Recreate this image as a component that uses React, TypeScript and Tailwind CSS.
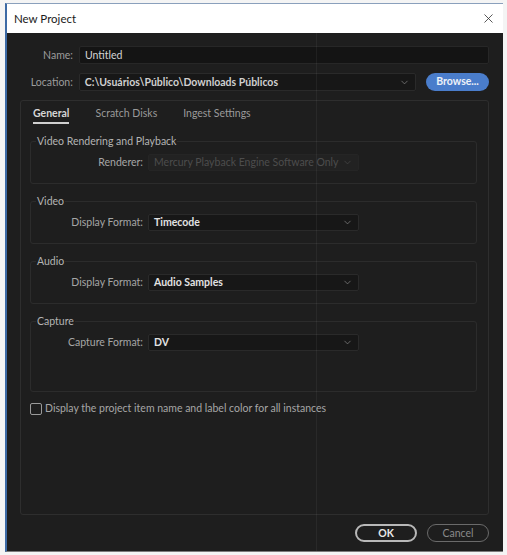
import { ChevronDown, X } from 'lucide-react'

const font = { fontFamily: 'Lato, "Noto Sans", sans-serif' }

function Select({ value, disabled, width = 'w-[211px]' }: { value: string; disabled?: boolean; width?: string }) {
  return (
    <div
      className={`${width} h-[17px] flex items-center justify-between pl-[5px] pr-[5px] rounded-[2px] border ${
        disabled ? 'bg-[#222222] border-[#252525] text-[#4d4d4d]' : 'bg-[#171717] border-[#2a2a2a] text-[#e2e2e2] font-bold'
      }`}
    >
      <span className="text-[10.5px] leading-none whitespace-nowrap">{value}</span>
      <ChevronDown size={11} strokeWidth={1.5} className={disabled ? 'text-[#4a4a4a] shrink-0' : 'text-[#8a8a8a] shrink-0'} />
    </div>
  )
}

function Group({ title, children, tall }: { title: string; children: React.ReactNode; tall?: boolean }) {
  return (
    <fieldset className={`border border-[#2c2c2c] rounded-[3px] ${tall ? 'h-[78px]' : 'h-[50px]'}`}>
      <legend className="ml-[5px] px-[1px] text-[10.5px] leading-[14px] text-[#b4b4b4]">{title}</legend>
      <div className="pt-[6px]">{children}</div>
    </fieldset>
  )
}

function Row({ label, value, disabled }: { label: string; value: string; disabled?: boolean }) {
  return (
    <div className="flex items-center">
      <span className="w-[113px] text-right text-[10.5px] text-[#a6a6a6] pr-[1px]">{label}</span>
      <div className="ml-[4px]">
        <Select value={value} disabled={disabled} />
      </div>
    </div>
  )
}

export default function App() {
  return (
    <div className="w-[507px] h-[555px] bg-[#f4f4f4] pt-[3px] pl-[5px] pr-[4px] pb-[3px]" style={font}>
      <div className="relative h-full flex flex-col border-t border-[#8aa0bc] border-l-2 border-l-[#3d6aa5] border-b border-b-[#7b7b7b]">
        {/* title bar */}
        <div className="h-[29px] bg-white flex items-center justify-between pl-[7px] pr-[7px]">
          <span className="text-[11.5px] text-[#1a1a1a]">New Project</span>
          <X size={15} strokeWidth={1.3} className="text-[#333]" />
        </div>

        {/* body */}
        <div className="relative flex-1 bg-[#1e1e1e] pt-[13px] pr-[14px] flex flex-col">
          <div className="absolute top-0 bottom-0 left-[309px] w-px bg-white/[0.05]" />

          <div className="flex items-center h-[18px]">
            <span className="w-[66px] text-right text-[10.5px] text-[#9c9c9c] pt-[1px]">Name:</span>
            <div className="ml-[6px] flex-1 h-[18px] bg-[#141414] border border-[#272727] rounded-[2px] flex items-center px-[5px] pt-[1px]">
              <span className="text-[10.5px] text-[#d4d4d4]">Untitled</span>
            </div>
          </div>

          <div className="flex items-center h-[18px] mt-[9px]">
            <span className="w-[66px] text-right text-[10.5px] text-[#9c9c9c] pt-[1px]">Location:</span>
            <div className="ml-[6px] w-[338px] h-[18px] bg-[#171717] border border-[#2a2a2a] rounded-[2px] flex items-center justify-between px-[5px]">
              <span className="text-[10.5px] font-bold text-[#d0d0d0] pt-[1px]">C:\Usuários\Público\Downloads Públicos</span>
              <ChevronDown size={11} strokeWidth={1.5} className="text-[#8a8a8a]" />
            </div>
            <button className="ml-[10px] w-[63px] h-[18px] rounded-full bg-[#4a7dcb] text-[10.5px] text-[#eef2f8] font-bold">
              Browse...
            </button>
          </div>

          {/* tab panel */}
          <div className="ml-[13px] mt-[9px] h-[415px] border border-[#2e2e2e] rounded-[3px] flex flex-col">
            <div className="flex pl-[12px] pt-[5px] gap-[26px] h-[24px]">
              <span className="text-[10.5px] font-bold text-[#d6d6d6] border-b-2 border-[#cfcfcf] h-[18px] leading-[15px]">General</span>
              <span className="text-[10.5px] text-[#9a9a9a] leading-[15px]">Scratch Disks</span>
              <span className="text-[10.5px] text-[#9a9a9a] leading-[15px]">Ingest Settings</span>
            </div>

            <div className="ml-[9px] mr-[11px] mt-[9px] flex flex-col gap-[10px]">
              <Group title="Video Rendering and Playback">
                <Row label="Renderer:" value="Mercury Playback Engine Software Only" disabled />
              </Group>
              <Group title="Video">
                <Row label="Display Format:" value="Timecode" />
              </Group>
              <Group title="Audio">
                <Row label="Display Format:" value="Audio Samples" />
              </Group>
              <Group title="Capture" tall>
                <Row label="Capture Format:" value="DV" />
              </Group>

              <div className="flex items-center gap-[3px] -mt-[1px]">
                <div className="w-[12px] h-[12px] border border-[#9a9a9a] rounded-[2px]" />
                <span className="text-[10.5px] text-[#a6a6a6]">Display the project item name and label color for all instances</span>
              </div>
            </div>
          </div>

          <div className="flex justify-end gap-[10px] mt-[9px]">
            <button className="w-[62px] h-[18px] rounded-full border-2 border-[#b8b8b8] text-[10.5px] font-bold text-[#e8e8e8] leading-none">
              OK
            </button>
            <button className="w-[62px] h-[18px] rounded-full border border-[#6a6a6a] text-[10.5px] text-[#8a8a8a] leading-none">
              Cancel
            </button>
          </div>
        </div>
      </div>
    </div>
  )
}
